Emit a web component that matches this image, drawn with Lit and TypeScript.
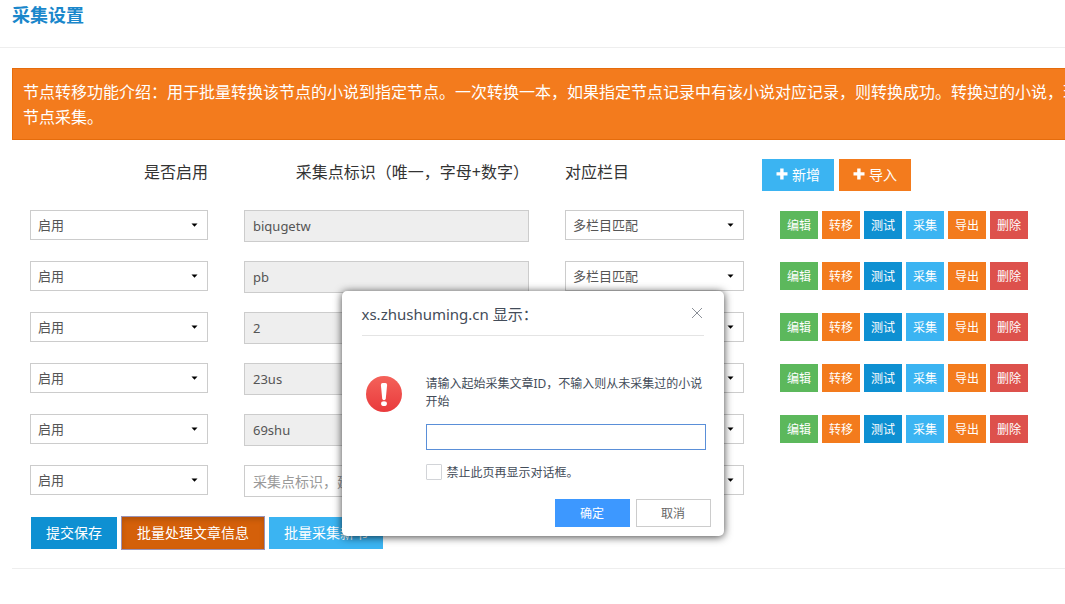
import { LitElement, html, css, svg, nothing } from "lit";
import { customElement, property } from "lit/decorators.js";

const plusIcon = svg`<svg class="plus" viewBox="0 0 12 12" aria-hidden="true"><path d="M4.2 0.5h3.4v3.7h3.9v3.4H7.6v3.9H4.2V7.6H0.5V4.2h3.7z" fill="currentColor"/></svg>`;

interface Node {
  id: string;
  saved: boolean;
}

const NODES: Node[] = [
  { id: "biqugetw", saved: true },
  { id: "pb", saved: true },
  { id: "2", saved: true },
  { id: "23us", saved: true },
  { id: "69shu", saved: true },
  { id: "", saved: false },
];

const ACTIONS = [
  ["编辑", "green"],
  ["转移", "orange"],
  ["测试", "blue"],
  ["采集", "sky"],
  ["导出", "orange"],
  ["删除", "red"],
];

const base = css`
  * {
    box-sizing: border-box;
  }
  button,
  input,
  select {
    font-family: inherit;
    margin: 0;
    border-radius: 0;
  }
  button {
    border: 0;
    padding: 0;
    white-space: nowrap;
    cursor: pointer;
  }
`;

@customElement("node-row")
class NodeRow extends LitElement {
  @property({ attribute: false }) node!: Node;

  static styles = [
    base,
    css`
      :host {
        display: grid;
        grid-template-columns: 178fr 285fr 179fr 285fr;
        column-gap: 36px;
        align-items: start;
        height: 32px;
      }
      .pick {
        display: grid;
        align-items: center;
      }
      .pick > * {
        grid-area: 1 / 1;
      }
      .pick select {
        appearance: none;
        width: 100%;
        height: 30px;
        padding: 0 7px;
        border: 1px solid #ccc;
        background: #fff;
        color: #555;
        font-size: 13px;
      }
      .arrow {
        justify-self: end;
        width: 7px;
        height: 4px;
        margin-right: 10px;
        pointer-events: none;
      }
      .mark {
        width: 100%;
        height: 32px;
        min-width: 0;
        padding: 0 8px;
        border: 1px solid #ccc;
        background: #fff;
        color: #555;
        font-size: 14px;
      }
      .mark:read-only {
        background: #eee;
        font-size: 13px;
      }
      .mark::placeholder {
        color: #999;
      }
      .actions {
        display: flex;
        gap: 4px;
        padding-top: 1px;
      }
      .act {
        width: 38px;
        height: 28px;
        color: #fff;
        font-size: 12px;
      }
      .green { background: #5cb85c; }
      .orange { background: #f37b1d; }
      .blue { background: #0e90d2; }
      .sky { background: #3bb4f2; }
      .red { background: #dd514c; }
    `,
  ];

  private pick(label: string, value: string, other: string) {
    return html`<span class="pick">
      <select aria-label=${label}>
        <option>${value}</option>
        <option>${other}</option>
      </select>
      <svg class="arrow" viewBox="0 0 7 4" aria-hidden="true"><path d="M0.5 0.5h6L3.5 3.8z" fill="#000" /></svg>
    </span>`;
  }

  render() {
    const { id, saved } = this.node;
    return html`
      ${this.pick("是否启用", "启用", "禁用")}
      <input class="mark" aria-label="采集点标识" .value=${id} ?readonly=${saved}
        placeholder=${saved ? "" : "采集点标识，建议字母+数字"} />
      ${this.pick("对应栏目", "多栏目匹配", "单栏目")}
      ${saved
        ? html`<div class="actions">
            ${ACTIONS.map(([text, tone]) => html`<button class="act ${tone}">${text}</button>`)}
          </div>`
        : nothing}
    `;
  }
}

@customElement("prompt-dialog")
class PromptDialog extends LitElement {
  static styles = [
    base,
    css`
      :host {
        display: block;
        width: 382px;
        padding: 0 13px 9px 20px;
        border-radius: 5px;
        background: #fff;
        box-shadow: 0 1px 9px rgba(0, 0, 0, 0.75);
        color: #434c59;
        font-size: 12px;
      }
      .head {
        display: flex;
        align-items: center;
        justify-content: space-between;
        height: 45px;
        margin-right: 7px;
        border-bottom: 1px solid #e4e4e4;
      }
      h2 {
        margin: 0;
        font-size: 15px;
        font-weight: 400;
      }
      .close {
        display: flex;
        margin-right: 1px;
        background: none;
      }
      .close svg {
        width: 12px;
        height: 12px;
      }
      .body {
        display: grid;
        grid-template-columns: 44px 1fr;
        column-gap: 20px;
        padding: 39px 5px 0 0;
      }
      .alert {
        width: 36px;
        height: 36px;
        margin: 1px 0 0 4px;
      }
      .message {
        display: block;
        line-height: 18px;
      }
      .answer {
        width: 100%;
        height: 26px;
        margin-top: 13px;
        padding: 0 6px;
        border: 1px solid #5a8fd8;
        outline: 0;
        background: #fff;
        font-size: 13px;
      }
      .mute {
        display: flex;
        align-items: center;
        gap: 5px;
        height: 18px;
        margin-top: 13px;
      }
      .mute input {
        appearance: none;
        width: 16px;
        height: 16px;
        border: 1px solid #d2d4d8;
        border-radius: 1px;
        background: #fff;
      }
      .foot {
        display: flex;
        justify-content: flex-end;
        gap: 6px;
        padding-top: 18px;
      }
      .foot button {
        width: 75px;
        height: 28px;
        font-size: 12px;
      }
      .ok {
        background: #3d98ff;
        color: #fff;
      }
      .foot .cancel {
        border: 1px solid #ccc;
        background: #fff;
        color: #666;
      }
    `,
  ];

  render() {
    return html`
      <div class="head">
        <h2>xs.zhushuming.cn 显示：</h2>
        <button class="close" aria-label="关闭">
          <svg viewBox="0 0 12 12"><path d="M1 1l10 10M11 1L1 11" stroke="#8b9098" fill="none" /></svg>
        </button>
      </div>
      <div class="body">
        <svg class="alert" viewBox="0 0 36 36" aria-hidden="true">
          <defs>
            <linearGradient id="red" x1="0" y1="0" x2="0" y2="1">
              <stop offset="0" stop-color="#f4625a" />
              <stop offset="1" stop-color="#e93a3c" />
            </linearGradient>
          </defs>
          <circle cx="18" cy="18" r="18" fill="url(#red)" />
          <path d="M14.9 9Q14.9 7 16.6 7h2.8q1.7 0 1.7 2L19.8 22.6q-.2 1.6-1.8 1.6t-1.8-1.6z" fill="#fff" />
          <ellipse cx="18" cy="27.7" rx="2.9" ry="2.4" fill="#fff" />
        </svg>
        <div>
          <label class="message" for="answer">请输入起始采集文章ID，不输入则从未采集过的小说开始</label>
          <input class="answer" id="answer" type="text" />
          <label class="mute"><input type="checkbox" />禁止此页再显示对话框。</label>
        </div>
      </div>
      <div class="foot">
        <button class="ok">确定</button>
        <button class="cancel">取消</button>
      </div>
    `;
  }
}

@customElement("app-root")
class AppRoot extends LitElement {
  static styles = [
    base,
    css`
      :host {
        display: block;
        position: relative;
        min-height: 100vh;
        overflow: hidden;
        background: #fff;
        color: #333;
        font-family: "Noto Sans", "Noto Sans CJK SC", sans-serif;
        font-size: 16px;
      }
      .title {
        margin: 0;
        padding: 0 12px;
        height: 48px;
        border-bottom: 1px solid #eee;
        color: #1a87cb;
        font-size: 18px;
        line-height: 30px;
      }
      .notice {
        margin: 20px 0 0 12px;
        padding: 11px 0 9px 10px;
        border: 1px solid #e56c0c;
        border-right: 0;
        background: #f37b1d;
        color: #fff;
        line-height: 25px;
        white-space: nowrap;
        overflow: hidden;
      }
      .heads {
        display: grid;
        grid-template-columns: 178fr 285fr 179fr 285fr;
        column-gap: 36px;
        padding: 19px 0 0 30px;
        line-height: 26px;
        white-space: nowrap;
      }
      .end {
        justify-self: end;
      }
      .tools {
        display: flex;
        gap: 5px;
        margin-left: -18px;
      }
      .btn {
        height: 32px;
        padding: 0 15px 2px;
        color: #fff;
        font-size: 14px;
      }
      .tools .btn {
        display: flex;
        align-items: center;
        gap: 4px;
        padding: 0 14px 2px;
      }
      .plus {
        width: 12px;
        height: 12px;
      }
      .orange { background: #f37b1d; }
      .blue { background: #0e90d2; }
      .sky { background: #3bb4f2; }
      .pressed {
        background: #d4600a;
        outline: 1px solid #9a93b8;
        box-shadow: inset 0 3px 5px rgba(0, 0, 0, 0.15);
      }
      .rows {
        display: grid;
        row-gap: 19px;
        padding: 19px 0 20px 30px;
      }
      .batch {
        display: flex;
        gap: 5px;
        margin-left: 12px;
        padding: 0 0 19px 19px;
        border-bottom: 1px solid #eee;
      }
      .layer {
        position: absolute;
        inset: 291px 0 auto 0;
        display: flex;
        justify-content: center;
      }
    `,
  ];

  render() {
    return html`
      <h1 class="title">采集设置</h1>
      <main>
        <div class="notice">
          节点转移功能介绍：用于批量转换该节点的小说到指定节点。一次转换一本，如果指定节点记录中有该小说对应记录，则转换成功。转换过的小说，现<br />节点采集。
        </div>
        <div class="heads">
          <span class="end">是否启用</span>
          <span class="end">采集点标识（唯一，字母+数字）</span>
          <span>对应栏目</span>
          <div class="tools">
            <button class="btn sky">${plusIcon}新增</button>
            <button class="btn orange">${plusIcon}导入</button>
          </div>
        </div>
        <div class="rows">${NODES.map((node) => html`<node-row .node=${node}></node-row>`)}</div>
        <div class="batch">
          <button class="btn blue">提交保存</button>
          <button class="btn pressed">批量处理文章信息</button>
          <button class="btn sky">批量采集新书</button>
        </div>
      </main>
      <div class="layer">
        <prompt-dialog role="dialog" aria-label="xs.zhushuming.cn 显示"></prompt-dialog>
      </div>
    `;
  }
}
